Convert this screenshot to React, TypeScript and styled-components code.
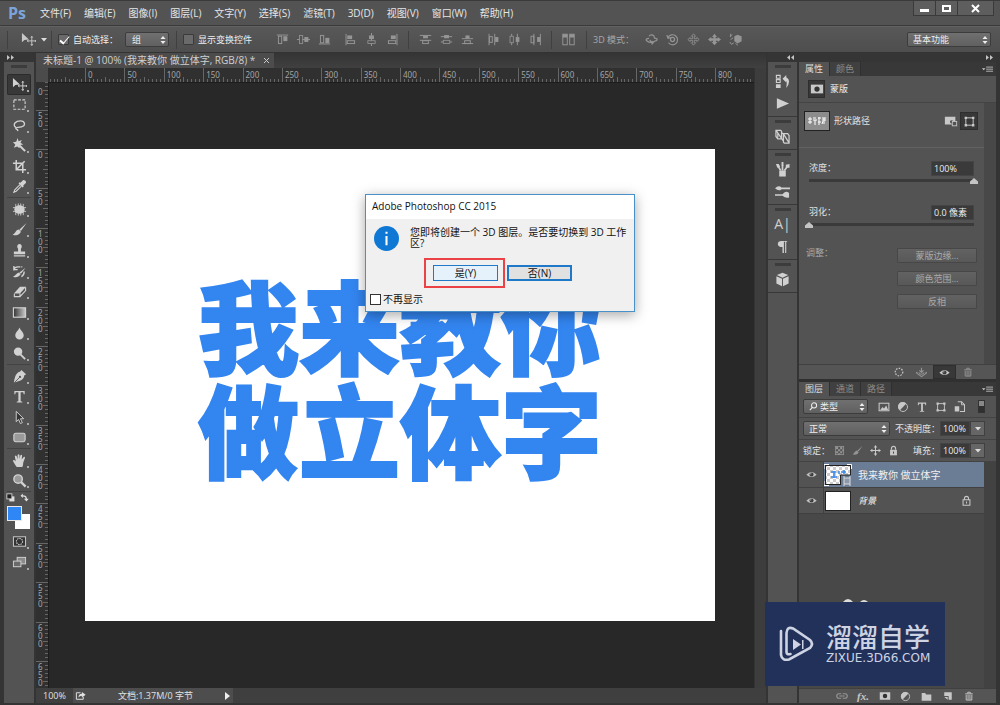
import React from "react";
import styled, { createGlobalStyle, css } from "styled-components";

const c = {
  panel: "#535353",
  dark: "#383838",
  edge: "#303030",
  field: "#3a3a3a",
  text: "#dedede",
  icon: "#c8c8c8",
  blue: "#3385f0",
};
const sans = `"Open Sans", "Noto Sans CJK SC", sans-serif`;

const GlobalStyle = createGlobalStyle`
  * { box-sizing: border-box; }
  body { margin: 0; background: ${c.edge}; }
  button, input, select { font: inherit; color: inherit; margin: 0; padding: 0; border: 0; background: none; outline: 0; }
`;

/* ---------- icons ---------- */

const IconSvg = styled.svg<{ $size: number }>`
  display: block;
  flex: none;
  width: ${(p) => p.$size}px;
  height: ${(p) => p.$size}px;
`;

const line = { fill: "none", stroke: "currentColor", strokeWidth: 1.2 };
const solid = { fill: "currentColor" };

const glyphs: Record<string, React.ReactNode> = {
  move: (
    <>
      <path d="M1 1v10l2.600-2.600L8.500 8z" {...solid} />
      <path d="M11.500 5v9M7 9.500h9M10.500 6l1-1.500 1 1.500M10.500 13l1 1.500 1-1.500M8 8.500l-1.500 1L8 10.500M15 8.500l1 1-1 1" {...line} strokeWidth={1} />
    </>
  ),
  marquee: <rect x="2" y="3" width="12" height="10" {...line} strokeDasharray="3 1.500" />,
  lasso: <path d="M4 10C0 7 4 3 9 3s6 5 1 6.500c-3 1-6 0-6 1.500 0 1.500 3 .5 2 3" {...line} strokeWidth={1.4} />,
  wand: (
    <>
      <path d="M6 0l1 3.500L10.500 2 9 5l3 2-3.500.5L8 11 5.500 9l-3.500 1.500L3.500 7 1 4.500l3.500-.5z" {...solid} />
      <path d="M8 8l6 6" {...line} strokeWidth={2.2} />
    </>
  ),
  crop: <path d="M4.500 1v10.500H15M1 4.500h10.500V15M4.500 11.500l9-9" {...line} strokeWidth={1.6} />,
  dropper: (
    <>
      <path d="M9 4l3-3q3 0 3 3l-3 3 .5 1-1.200 1L7 4.800 8 3.500z" {...solid} />
      <path d="M8.500 6L3 11.500 2 14l2.500-1L10 7.500" {...line} />
    </>
  ),
  heal: (
    <>
      <ellipse cx="8" cy="8" rx="5.500" ry="4.500" {...solid} />
      <path d="M4 2v12M6.700 1.500v13M9.300 1.500v13M12 2v12M1 6h14M1 10h14" {...line} strokeWidth={0.9} />
    </>
  ),
  brush: <path d="M15.500 1L8 8l1.500 1.500zM7.500 8L9.500 10.500C8 14.500 4 14.500 .5 13.500 4 12.500 3.500 8.500 7.500 8z" {...solid} />,
  stamp: <path d="M6 2a2.500 2.500 0 0 1 4 0q1 2-.5 4v3H14v3H2V9h4.500V6Q5 4 6 2zM2 13h12v1.500H2z" {...solid} />,
  history: (
    <>
      <path d="M14.500 4L8 9l1.500 1.500zM7.500 9l1.700 2C7 14.500 4 14.500 1 13.500 4 12.500 4.500 9.500 7.500 9z" {...solid} />
      <path d="M2 7Q2 3 7 3H11M2 2v4h4M13 8q0 4-3 5.500" {...line} strokeWidth={1.4} strokeDasharray="9 1" />
    </>
  ),
  eraser: (
    <>
      <path d="M8.500 3h6.500l-6.500 7H2z" {...solid} />
      <path d="M2.500 10.500v3h6l6-6.500V3.500M8.500 10v3.500" {...line} />
    </>
  ),
  gradient: (
    <>
      <defs>
        <linearGradient id="tool-gradient">
          <stop offset="0" stopColor="#333" />
          <stop offset="1" stopColor="#ccc" />
        </linearGradient>
      </defs>
      <rect x="1.500" y="3" width="13" height="10" fill="url(#tool-gradient)" stroke="currentColor" strokeWidth="1.200" />
    </>
  ),
  blur: <path d="M8 1.500c1 3 4.500 5 4.500 8.500a4.500 4.500 0 0 1-9 0c0-3.500 3.500-5.500 4.500-8.500z" {...solid} />,
  dodge: (
    <>
      <circle cx="6.500" cy="6" r="4.500" {...solid} />
      <path d="M9 9l5 5" {...line} strokeWidth={2} />
    </>
  ),
  pen: (
    <>
      <path d="M10 1l5 4.500-2 1.500c0 4-4 6-11 7.500 1-7 3-11 6.500-11.500z" {...solid} />
      <path d="M2.500 14.500L8 9" stroke="#535353" strokeWidth="1" />
      <circle cx="8.500" cy="8.500" r="1.200" fill="#535353" />
    </>
  ),
  type: <path d="M2.500 2h11v3.500h-1L12 3.500H9.200V13l1.800.5v.8H5v-.8l1.800-.5V3.500H4L3.500 5.500h-1z" {...solid} />,
  pointer: <path d="M4.500 1.500v11l2.500-2.500 2 4.500 2-1-2-4.200h3.500z" fill="#333" stroke="currentColor" />,
  shape: <rect x="2" y="3.500" width="12" height="9" rx="2" fill="#9a9a9a" stroke="currentColor" strokeWidth="1.200" />,
  hand: <path d="M5 15C3 12 1 9 1 8q1-1.300 3 1L3 3.500q1-1.500 2 0l1 3.200V2q1-1.500 2 0v4.500l1-4q1.300-1.200 1.800.2L10.300 7l2.200-2.800q1.500-.5 1.300 1L12 10q0 3-1 5z" {...solid} />,
  zoom: (
    <>
      <circle cx="6.500" cy="6.500" r="4.500" fill="#9a9a9a" stroke="currentColor" strokeWidth="1.500" />
      <path d="M9.500 9.500l5 5" {...line} strokeWidth={2.5} />
    </>
  ),
  quickMask: (
    <>
      <rect x="1.500" y="3" width="13" height="10" fill="#333" stroke="currentColor" />
      <circle cx="8" cy="8" r="3.300" {...line} strokeDasharray="1.500 1" />
    </>
  ),
  screens: (
    <>
      <rect x="5.500" y="2.500" width="9" height="7" fill="#8b8b8b" stroke="currentColor" />
      <rect x="1.500" y="6.500" width="8" height="6" fill="#6a6a6a" stroke="currentColor" />
    </>
  ),
  defaults: (
    <>
      <rect x="6" y="6" width="9" height="9" {...solid} />
      <rect x="1.500" y="1.500" width="9" height="9" fill="#222" stroke="currentColor" strokeWidth="1.500" />
    </>
  ),
  swap: <path d="M5 1L1 5l4 4V6q5 0 5 4H7l4.500 5 4-5h-3Q12 4 5 4z" {...solid} />,
  alignTop: (<><path d="M1 2.500h14" {...line} /><rect x="3" y="4" width="4" height="9" {...line} /><rect x="9" y="4" width="5" height="6" {...solid} /></>),
  alignMid: (<><path d="M0 8h16" {...line} /><rect x="3" y="3" width="4" height="10" fill="#535353" stroke="currentColor" /><rect x="9" y="5" width="5" height="6" {...solid} /></>),
  alignBottom: (<><path d="M1 13.500h14" {...line} /><rect x="3" y="3" width="4" height="9" {...line} /><rect x="9" y="6" width="5" height="6.500" {...solid} /></>),
  alignLeft: (<><path d="M2.500 1v14" {...line} /><rect x="4" y="3" width="6" height="4.500" {...solid} /><rect x="4" y="9.500" width="9" height="3.500" {...line} /></>),
  alignCenter: (<><path d="M8 0v16" {...line} /><rect x="5" y="3" width="6" height="4.500" {...solid} /><rect x="3.500" y="9.500" width="9" height="3.500" fill="#535353" stroke="currentColor" /></>),
  alignRight: (<><path d="M13.500 1v14" {...line} /><rect x="6" y="3" width="6" height="4.500" {...solid} /><rect x="3" y="9.500" width="9" height="3.500" {...line} /></>),
  distTop: (<><path d="M1 3h14M1 9h14" {...line} /><rect x="5" y="3.500" width="6" height="3" {...solid} /><rect x="4.500" y="9.500" width="7" height="3.500" {...line} /></>),
  distMid: (<><path d="M1 4.500h14M1 11h14" {...line} /><rect x="5" y="2.500" width="6" height="4" {...solid} /><rect x="4" y="9" width="8" height="4" fill="#535353" stroke="currentColor" /></>),
  distBottom: (<><path d="M1 7h14M1 13h14" {...line} /><rect x="5.500" y="3" width="5" height="4" {...solid} /><rect x="4.500" y="9.500" width="7" height="3.500" {...line} /></>),
  distLeft: (<><path d="M2.500 1v14M9.500 1v14" {...line} /><rect x="3" y="4.500" width="3.500" height="7" {...line} /><rect x="10" y="5" width="4" height="6" {...solid} /></>),
  distCenter: (<><path d="M4.500 1v14M11.500 1v14" {...line} /><rect x="2.500" y="4" width="4" height="8" fill="#535353" stroke="currentColor" /><rect x="9.500" y="5" width="4.500" height="6" {...solid} /></>),
  distRight: (<><path d="M6 1v14M14 1v14" {...line} /><rect x="2.500" y="4" width="3.500" height="8" {...line} /><rect x="10" y="5" width="3.500" height="6" {...solid} /></>),
  autoAlign: (<><rect x="1" y="1.500" width="5.500" height="13" {...line} /><rect x="9.500" y="1.500" width="5.500" height="13" {...line} /><path d="M1 1.500h5.500v4H1zM9.500 1.500H15v4H9.500z" {...solid} /></>),
  orbit: <path d="M5 4a3.500 3.500 0 0 1 6.500 1.500M5 6.500Q0 7 2 9.500t8 2.500l-1-2M6 8.500a3.500 3.500 0 0 0 6 1.500q4-1 2.500-3L11 6M10 12l-2 2" {...line} strokeWidth={1.5} />,
  roll: (<><circle cx="8" cy="8" r="2.500" {...line} strokeWidth={1.5} /><path d="M2.500 5.500A6.200 6.200 0 1 1 3 12M1 2.500l1.500 4 4-1" {...line} strokeWidth={1.4} /></>),
  pan3d: <path d="M8 1L5.500 4H7v3H4V5.500L1 8l3 2.500V9h3v3H5.500L8 15l2.500-3H9V9h3v1.500L15 8l-3-2.500V7H9V4h1.500z" {...line} strokeWidth={1} />,
  slide3d: <path d="M8 1L5 5h1.500l.5 1.500H4V5L0 8l4 3V9.500h2.500L6 11H4.500L8 15 11.500 11H10l-.5-1.500H12V11l4-3-4-3v1.500H9L9.500 5H11z" {...solid} />,
  scale3d: (<><path d="M10.500 2l5 2v6l-5 3-4-3V4z" {...solid} /><path d="M1 4l3-2M2 8l3-2M1 11l2 3 3-2M2 1v4M8 13l3 2" {...line} /></>),
  historyPanel: (<><path d="M1.500 1.500h4v3h-4zM1.500 6h4v3h-4z" {...line} /><path d="M1 11h5v4H1zM8 5l4-4v2.500q6 3 0 11.500 1-8 0-7.500V9z" {...solid} /></>),
  play: <path d="M2 2.500l13 5.500-13 5.500z" {...solid} />,
  navigator: <path d="M1 1.500h5l1 1v8H3L1 8zM1.500 2L7 10M3 4v5M9 5h4.500l1.500 2v8h-5l-1-1zM9.500 6l5 8M7 4l3 2M7 10l2 3" {...line} strokeWidth={1.3} />,
  brushes: (<><path d="M4.500 9h7v6.500h-7z" {...solid} /><path d="M6 9L3 4M8 9V3M10 9l3-4" {...line} strokeWidth={1.8} /><path d="M1 2l3 0 1.500 3-3 1zM7 0h2v4H7zM11.500 3l4-1v4l-4 0z" {...solid} /></>),
  presets: (<><path d="M0 4.500q4-4 7-.7h9v1.700H7Q4 8.500 0 4.500z" {...solid} /><path d="M0 11h8q3-4.500 7-1.500v5q-4 1-7-2H0z" {...solid} /></>),
  paragraph: <path d="M7 2h6v1h-1v12h-1.200V3H9.500v12H8V8.500Q3 8.500 3 5.200 3 2 7 2z" {...solid} />,
  cube: <path d="M8 .8l6 2.500-6 2.900-6-2.900zM1.500 4.500L7.500 7.300v7.900l-6-3zM14.500 4.500L8.500 7.300v7.900l6-3z" {...solid} />,
  mask: (<><rect x="1" y="3" width="14" height="10" {...solid} /><circle cx="8" cy="8" r="3" fill="#333" /></>),
  addMask: (<><path d="M1 3h12v5h-2q-3-2-4 0t2 3v1H1z" {...solid} /><rect x="9.500" y="8.500" width="5" height="5" fill="#535353" stroke="currentColor" /></>),
  vector: (<><rect x="3.500" y="3.500" width="9" height="9" {...line} /><path d="M2 2h3v3H2zM11 2h3v3h-3zM2 11h3v3H2zM11 11h3v3h-3z" {...solid} /></>),
  selection: <circle cx="8" cy="8" r="6" {...line} strokeWidth={2} strokeDasharray="2.500 2" />,
  apply: <path d="M8 1v6M5 5l3 3 3-3M2 7l-1.500 1.500L8 14l7.500-5.500L14 7M4 8q4 5 8 0" {...line} strokeWidth={1.6} />,
  eye: (<><path d="M.5 8.500Q8 0 15.500 8.500 8 15 .5 8.500z" {...solid} /><circle cx="8" cy="8" r="3" fill="#3b3b3b" /><circle cx="7" cy="7" r="1" {...solid} /></>),
  trash: (<><path d="M2 4.500h12M6 4V2h4v2" {...line} strokeWidth={1.5} /><path d="M3.500 6v8.500h9V6M6.500 6v8M9.500 6v8" {...line} strokeWidth={1.5} /></>),
  menu: (<><path d="M0 6h5L2.500 9z" {...solid} /><path d="M6 4.500h10M6 7.500h10M6 10.500h10" {...line} /></>),
  image: (<><rect x="1.500" y="3" width="13" height="10" {...line} strokeWidth={1.4} /><path d="M3 12l3-4 2 2 3-4 2.500 6z" {...solid} /></>),
  adjust: (<><circle cx="8" cy="8" r="6" {...line} /><path d="M3.800 12.200A6 6 0 1 1 12.200 3.800z" {...solid} /></>),
  smart: (<><path d="M5 1h5l4 4v9H8" {...line} strokeWidth={1.4} /><path d="M1 7h6v7H1z" {...solid} /><path d="M10 1v4h4" {...line} /></>),
  checker: (<><rect x="2" y="2" width="12" height="12" {...line} /><path d="M3 3h3v3H3zM9 3h3v3H9zM6 6h3v3H6zM3 9h3v3H3zM9 9h3v3H9zM12 6h2v3h-2zM6 12h3v2H6z" {...solid} /></>),
  moveAll: (<><path d="M8 2v12M2 8h12" {...line} strokeWidth={1.5} /><path d="M8 0l2.500 3.500h-5zM8 16l2.500-3.500h-5zM0 8l3.500-2.500v5zM16 8l-3.500-2.500v5z" {...solid} /></>),
  lock: (<><path d="M5 7V5a3 3 0 0 1 6 0v2" {...line} strokeWidth={1.7} /><path d="M3 7h10v8H3z" {...solid} /><path d="M8 9.500v3" stroke="#444" strokeWidth="1.500" /></>),
  lockLine: <path d="M5 7V5a3 3 0 0 1 6 0v2M3 7h10v8H3zM8 9.500v3" {...line} strokeWidth={1.5} />,
  search: (<><circle cx="9" cy="6" r="4.500" {...line} strokeWidth={1.8} /><path d="M6 9.500l-4.500 5" {...line} strokeWidth={2} /></>),
  link: <path d="M7 5H4a3 3 0 0 0 0 6h3M9 5h3a3 3 0 0 1 0 6H9M4.500 8h7" {...line} strokeWidth={1.5} />,
  folder: <path d="M1 3h5l1.500 2H15v9H1z" {...solid} />,
  newLayer: (<><path d="M2 2h12v12H9V8H2z" {...solid} /><path d="M2 9.500h5.500V14z" {...solid} /></>),
  share: (<><path d="M8 4H2v9.500h10V10" {...line} strokeWidth={1.4} /><path d="M5 11q0-5 5-5.500V3l5.500 4-5.500 4V8.500Q7 8.500 5 11z" {...solid} /></>),
};

const Icon = ({ name, size = 14 }: { name: string; size?: number }) => (
  <IconSvg $size={size} viewBox="0 0 16 16" aria-hidden="true">
    {glyphs[name]}
  </IconSvg>
);

/* ---------- shared controls ---------- */

const IconButton = styled.button<{ $w?: number; $dim?: boolean; $on?: boolean }>`
  display: flex;
  align-items: center;
  justify-content: center;
  width: ${(p) => p.$w ?? 20}px;
  height: 18px;
  flex: none;
  color: ${(p) => (p.$dim ? "#959595" : c.icon)};
  ${(p) => p.$on && css`background: ${c.dark}; box-shadow: inset 0 0 0 1px #2e2e2e;`}
`;

const SelectBox = styled.span<{ $w: number; $pad?: number }>`
  display: grid;
  flex: none;
  width: ${(p) => p.$w}px;
  height: 15px;
  align-items: center;
  color: #eee;
  background: linear-gradient(#707070, #606060);
  border: 1px solid #3c3c3c;
  border-radius: 2px;
  > * { grid-area: 1 / 1; }
  > svg { justify-self: end; margin-right: 2px; pointer-events: none; }
  > svg:first-child { justify-self: start; margin-left: 5px; }
  select {
    appearance: none;
    width: 100%;
    height: 13px;
    line-height: 13px;
    padding-left: ${(p) => p.$pad ?? 6}px;
  }
`;

const Select = ({ label, value, w, pad, icon }: { label: string; value: string; w: number; pad?: number; icon?: string }) => (
  <SelectBox $w={w} $pad={pad}>
    {icon && <Icon name={icon} size={9} />}
    <select aria-label={label} defaultValue={value}>
      <option>{value}</option>
    </select>
    <svg width="6" height="8" viewBox="0 0 6 8" aria-hidden="true">
      <path d="M3 0l2.500 3h-5zM3 8L.5 5h5z" fill="#eee" />
    </svg>
  </SelectBox>
);

const CheckLabel = styled.label<{ $after: number }>`
  display: flex;
  align-items: center;
  gap: 4px;
  margin-right: ${(p) => p.$after}px;
  white-space: nowrap;
  color: #eee;
`;
const DarkCheck = styled.input`
  appearance: none;
  width: 11px;
  height: 11px;
  border: 1px solid #3a3a3a;
  border-radius: 1px;
  background: #6a6a6a;
  position: relative;
  &:checked::after {
    content: "";
    position: absolute;
    left: 3px;
    top: -1px;
    width: 4px;
    height: 8px;
    border: solid #fff;
    border-width: 0 1px 2px 0;
    rotate: 40deg;
  }
`;

/* ---------- frame ---------- */

const Window = styled.div`
  position: relative;
  display: flex;
  flex-direction: column;
  height: 100vh;
  min-height: 640px;
  background: ${c.edge};
  color: ${c.text};
  font: 9px/12px ${sans};
  user-select: none;
`;

const MenuBar = styled.header`
  display: flex;
  align-items: center;
  height: 26px;
  flex: none;
  padding-left: 8px;
  background: ${c.panel};
  border-top: 1px solid #3a3a3a;
  border-bottom: 1px solid #3b3b3b;
`;
const PsMark = styled.div`
  width: 32px;
  color: #7ba5da;
  font: 700 16px/22px ${sans};
`;
const MenuList = styled.nav`
  display: flex;
  gap: 13px;
  font-size: 10px;
  button { white-space: nowrap; color: #e6e6e6; }
`;
const WindowButtons = styled.div`
  display: flex;
  align-self: flex-start;
  margin-left: auto;
  margin-right: 6px;
  height: 15px;
  border: 1px solid #3a3a3a;
  border-top: 0;
  background: #5e5e5e;
  color: #fff;
  button {
    display: grid;
    place-items: center;
    width: 22px;
    border-right: 1px solid #3a3a3a;
  }
  button:last-child { width: 35px; border: 0; }
`;

const OptionsBar = styled.div`
  display: flex;
  align-items: center;
  height: 27px;
  flex: none;
  padding: 0 9px 0 7px;
  background: linear-gradient(#585858, #4e4e4e);
  border-top: 1px solid #616161;
  border-bottom: 1px solid #333;
`;
const Rule = styled.i<{ $before?: number; $after?: number }>`
  width: 1px;
  height: 18px;
  margin-left: ${(p) => p.$before ?? 0}px;
  margin-right: ${(p) => p.$after ?? 6}px;
  background: #404040;
  flex: none;
`;
const PresetButton = styled.button`
  display: flex;
  align-items: center;
  gap: 5px;
  padding-left: 7px;
  color: ${c.icon};
`;
const IconGroup = styled.div`
  display: flex;
  margin-right: 5px;
  flex: none;
`;
const ModeLabel = styled.span`
  width: 48px;
  white-space: nowrap;
  color: #a8a8a8;
`;
const Push = styled.div`
  margin-left: auto;
`;

const Body = styled.div`
  display: grid;
  grid-template-columns: 30px minmax(0, 1fr) 29px 197px;
  grid-template-rows: minmax(0, 1fr);
  gap: 2px;
  flex: 1;
  min-height: 0;
  padding: 0 4px 2px;
  background: #343434;
`;
const Column = styled.div`
  display: flex;
  flex-direction: column;
  min-height: 0;
  background: ${c.panel};
`;
const Strip = styled.div<{ $right?: boolean }>`
  display: flex;
  align-items: center;
  justify-content: ${(p) => (p.$right ? "flex-end" : "flex-start")};
  height: 9px;
  flex: none;
  padding: 0 3px;
  background: #353535;
  color: #c4c4c4;
`;
const Chevrons = ({ left }: { left?: boolean }) => (
  <svg width="7" height="5" viewBox="0 0 7 5" aria-hidden="true">
    <path d={left ? "M3 0v5L0 2.500zM7 0v5L4 2.500z" : "M0 0v5l3-2.500zM4 0v5l3-2.500z"} fill="currentColor" />
  </svg>
);
const Grip = styled.i<{ $after: number }>`
  width: 16px;
  height: 3px;
  margin: 3px auto ${(p) => p.$after}px;
  flex: none;
  background: #3c3c3c;
`;

/* ---------- tools ---------- */

const ToolGroup = styled.div<{ $h: number }>`
  display: grid;
  grid-auto-rows: 1fr;
  height: ${(p) => p.$h}px;
  flex: none;
  justify-items: center;
  border-bottom: 1px solid #434343;
  margin: 0 3px 1px;
  &:last-of-type { border: 0; }
`;
const ToolButton = styled.button<{ $on?: boolean }>`
  position: relative;
  display: grid;
  place-items: center;
  width: 24px;
  color: #d2d2d2;
  ${(p) => p.$on && css`background: ${c.dark}; box-shadow: inset 0 0 0 1px #2b2b2b; border-radius: 2px;`}
  &::after {
    content: "";
    position: absolute;
    right: 2px;
    bottom: 3px;
    width: 2px;
    height: 2px;
    background: #aaa;
  }
`;
const Tiny = styled.div`
  display: flex;
  justify-content: space-between;
  padding: 0 5px 0 2px;
`;
const Swatches = styled.div`
  display: grid;
  width: 23px;
  height: 23px;
  margin: 4px 0 2px 3px;
  i { grid-area: 1 / 1; width: 15px; height: 15px; }
  i:first-child { background: #fff; place-self: end; }
  i:last-child { background: #2e87f5; border: 1px solid #e8e8e8; }
`;
const toolGroups: [number, string[]][] = [
  [124, ["move", "marquee", "lasso", "wand", "crop", "dropper"]],
  [166, ["heal", "brush", "stamp", "history", "eraser", "gradient", "blur", "dodge"]],
  [83, ["pen", "type", "pointer", "shape"]],
  [42, ["hand", "zoom"]],
];

/* ---------- document ---------- */

const DocColumn = styled.main`
  display: grid;
  grid-template-columns: 12px minmax(0, 1fr) 12px;
  grid-template-rows: 15px 14px minmax(0, 1fr) 15px;
  min-height: 0;
  background: #3a3a3a;
`;
const TabStrip = styled.div`
  grid-column: 1 / -1;
  display: flex;
  background: linear-gradient(#343434, #404040);
`;
const DocTab = styled.div`
  display: flex;
  align-items: center;
  gap: 9px;
  padding: 0 4px 0 7px;
  background: #4c4c4c;
  color: #d0d0d0;
  font-size: 10px;
  line-height: 15px;
  white-space: nowrap;
`;
const Corner = styled.div`
  background: #4b4b4b;
`;
const RulerSvg = styled.svg`
  display: block;
  width: 100%;
  height: 100%;
  background: #303030;
  text { font: 8px "Noto Sans", sans-serif; fill: #a5a5a5; }
  path { stroke: #666; fill: none; }
`;
const Track = styled.div`
  grid-row: 2 / 4;
  grid-column: 3;
  background: #3d3d3d;
  border-left: 1px solid #333;
`;
const Canvas = styled.div`
  grid-row: 3;
  grid-column: 2;
  padding: 66px 36px 0;
  overflow: hidden;
  background: #282828;
  border-top: 1px solid #1c1c1c;
  border-left: 1px solid #1c1c1c;
`;
const Artboard = styled.div`
  width: 630px;
  height: 472px;
  padding-top: 122px;
  background: #fff;
  color: ${c.blue};
  font: 900 101px/104px "Noto Sans CJK SC", sans-serif;
  -webkit-text-stroke: 2px ${c.blue};
  text-align: center;
  p { margin: 0; }
`;
const StatusBar = styled.footer`
  grid-column: 1 / -1;
  display: flex;
  background: #3f3f3f;
  line-height: 15px;
  color: #e2e2e2;
`;
const ZoomField = styled.input`
  width: 37px;
  padding-left: 7px;
`;
const StatusInfo = styled.div`
  display: flex;
  align-items: center;
  width: 160px;
  padding: 0 2px;
  background: #4d4d4d;
  span { flex: 1; text-align: center; }
`;

const UNIT = 39.375;
const ORIGIN_X = 37;
const ORIGIN_Y = 67;

const HorizontalRuler = () => {
  let d = "";
  for (let i = -9; i < 400; i++) {
    const x = Math.round(ORIGIN_X + (i * UNIT) / 10) + 0.5;
    if (x < 0) continue;
    const h = i % 10 === 0 ? 14 : i % 5 === 0 ? 5 : 3;
    d += `M${x} 14v-${h}`;
  }
  return (
    <RulerSvg aria-hidden="true">
      <path d={d} />
      {Array.from({ length: 17 }, (_, i) => (
        <text key={i} x={ORIGIN_X + 3 + i * UNIT} y={10}>{i * 50}</text>
      ))}
    </RulerSvg>
  );
};

const VerticalRuler = () => {
  let d = "";
  for (let i = -17; i < 300; i++) {
    const y = Math.round(ORIGIN_Y + (i * UNIT) / 10) + 0.5;
    const w = i % 10 === 0 ? 12 : i % 5 === 0 ? 5 : 3;
    d += `M12 ${y}h-${w}`;
  }
  const digits: { y: number; digit: string }[] = [];
  for (let i = -2; i <= 13; i++) {
    String(Math.abs(i * 50)).split("").forEach((digit, n) => {
      const y = ORIGIN_Y + i * UNIT + 9 + n * 8;
      if (y > 12) digits.push({ y, digit });
    });
  }
  return (
    <RulerSvg aria-hidden="true">
      <path d={d} />
      {digits.map(({ y, digit }) => <text key={y} x={2} y={y}>{digit}</text>)}
    </RulerSvg>
  );
};

/* ---------- dock ---------- */

const DockGroup = styled.div`
  display: flex;
  flex-direction: column;
  align-items: center;
  padding-bottom: 2px;
  border-bottom: 1px solid #383838;
  color: #d0d0d0;
`;
const DockButton = styled.button`
  display: grid;
  place-items: center;
  width: 26px;
  height: 22px;
`;
const AType = styled.span`
  font: 14px/18px ${sans};
`;
const dockGroups = [["historyPanel", "play"], ["navigator"], ["brushes", "presets"], ["A|", "paragraph"], ["cube"]];

/* ---------- panels ---------- */

const Tabs = styled.div`
  display: flex;
  height: 14px;
  flex: none;
  background: ${c.dark};
  color: #cfcfcf;
  > :last-child { margin-left: auto; height: 14px; }
`;
const Tab = styled.button<{ $on?: boolean }>`
  padding: 0 6px;
  color: ${(p) => (p.$on ? "#dcdcdc" : "#8c8c8c")};
  background: ${(p) => (p.$on ? c.panel : "#404040")};
  border-right: 1px solid #303030;
`;
const PanelTitle = styled.div`
  display: flex;
  align-items: center;
  gap: 5px;
  height: 27px;
  flex: none;
  padding-left: 9px;
  color: #eee;
  border-bottom: 1px solid #444;
`;
const Scroller = styled.div`
  border-right: 12px solid #484848;
`;
const PathRow = styled.div`
  display: flex;
  align-items: center;
  height: 45px;
  padding: 0 6px 8px 5px;
  border-bottom: 1px solid #626262;
  span { flex: 1; color: #e2e2e2; padding-left: 4px; }
`;
const PathThumb = styled.div`
  display: grid;
  place-items: center;
  width: 26px;
  height: 20px;
  background: #8c8c8c;
  border: 1px solid #222;
  color: #fff;
`;
const Field = styled.div`
  padding: 12px 10px 6px;
  color: #e2e2e2;
  > div { display: flex; justify-content: space-between; align-items: center; height: 16px; }
`;
const ValueInput = styled.input<{ $w: number }>`
  width: ${(p) => p.$w}px;
  height: 15px;
  padding-left: 2px;
  color: #eee;
  background: ${c.field};
  border: 1px solid #444;
`;
const Slider = styled.input`
  appearance: none;
  display: block;
  width: calc(100% + 8px);
  height: 10px;
  margin: 0 -4px;
  background: linear-gradient(#3a3a3a, #3a3a3a) center 3px / calc(100% - 8px) 3px no-repeat;
  &::-webkit-slider-thumb {
    appearance: none;
    width: 8px;
    height: 6px;
    background: #c4c4c4;
    clip-path: polygon(50% 0, 100% 60%, 100% 100%, 0 100%, 0 60%);
  }
`;
const Adjust = styled.div`
  display: flex;
  justify-content: space-between;
  padding: 11px 7px 55px;
  color: #aaa;
`;
const AdjustButtons = styled.div`
  display: grid;
  gap: 8px;
  margin-top: 1px;
  button {
    width: 80px;
    height: 15px;
    line-height: 13px;
    color: #aaa;
    background: linear-gradient(#626262, #585858);
    border: 1px solid #474747;
    border-radius: 1px;
  }
`;
const PanelFooter = styled.div`
  display: flex;
  align-items: center;
  justify-content: flex-end;
  height: 15px;
  flex: none;
  padding-right: 17px;
  background: #555;
  border-top: 1px solid #404040;
  button { height: 14px; }
`;
const Spacer = styled.div`
  height: 3px;
  flex: none;
  background: ${c.edge};
`;
const LayerRow = styled.div`
  display: flex;
  align-items: center;
  height: 22px;
  flex: none;
  padding: 0 11px 0 4px;
  border-bottom: 1px solid #434343;
  color: #e2e2e2;
`;
const Filters = styled.div<{ $before: number }>`
  display: flex;
  margin-left: ${(p) => p.$before}px;
`;
const Toggle = styled.i`
  width: 7px;
  height: 13px;
  margin-left: auto;
  background: linear-gradient(#888 45%, #303030 45%);
  border: 1px solid #333;
`;
const Amount = styled.label`
  display: flex;
  align-items: center;
  margin-left: auto;
  white-space: nowrap;
`;
const Stepper = styled.button`
  display: grid;
  place-items: center;
  width: 15px;
  height: 15px;
  background: #666;
  border: 1px solid #404040;
`;
const LayerList = styled.div`
  flex: 1;
  min-height: 0;
  background: #484848;
  border-right: 12px solid #424242;
`;
const Layer = styled.div<{ $on?: boolean }>`
  display: flex;
  align-items: center;
  height: 26px;
  background: ${(p) => (p.$on ? "#6b7c95" : c.panel)};
  border-bottom: 1px solid #404040;
  color: #f0f0f0;
`;
const LayerName = styled.span<{ $background?: boolean }>`
  flex: 1;
  padding-left: 6px;
  font-size: ${(p) => (p.$background ? 9 : 10)}px;
  font-style: ${(p) => (p.$background ? "italic" : "normal")};
`;
const EyeCell = styled.button`
  display: grid;
  place-items: center;
  width: 25px;
  height: 25px;
  background: ${c.panel};
  border-right: 1px solid #404040;
  color: #c4c4c4;
`;
const Thumb = styled.svg`
  display: block;
  width: 28px;
  height: 22px;
`;
const Fx = styled.span`
  font: italic 700 11px/12px "Liberation Serif", serif;
`;
const Caret = () => (
  <svg width="6" height="4" viewBox="0 0 6 4" aria-hidden="true"><path d="M0 0h6L3 3.500z" fill="#ddd" /></svg>
);

/* ---------- dialog ---------- */

const Dialog = styled.section`
  position: absolute;
  left: 50%;
  top: 194px;
  width: 270px;
  margin-left: -135px;
  background: #f0f0f0;
  border: 1px solid #4a90c8;
  box-shadow: 0 3px 12px rgba(0, 0, 0, 0.35);
  color: #111;
  font: 10px/11px ${sans};
  h2 { margin: 0; padding: 0 6px; height: 24px; font-size: 10px; font-weight: 400; line-height: 23px; background: #fff; }
`;
const Message = styled.div`
  display: flex;
  gap: 11px;
  padding: 7px 2px 0 8px;
  p { margin: 1px 0 0; width: 220px; }
`;
const Buttons = styled.div`
  display: flex;
  align-items: center;
  gap: 2px;
  padding-left: 58px;
  margin-top: 7px;
`;
const Highlight = styled.div`
  padding: 5px 5px 5px 7px;
  border: 2px solid #ea4245;
`;
const DialogButton = styled.button<{ $focus?: boolean }>`
  display: block;
  width: 65px;
  height: 16px;
  line-height: 12px;
  background: ${(p) => (p.$focus ? "#e1e1e1" : "#e5f1fb")};
  border: ${(p) => (p.$focus ? 2 : 1)}px solid #2078c8;
`;
const DontShow = styled.label`
  display: flex;
  align-items: center;
  gap: 2px;
  padding: 0 4px;
  height: 23px;
  input { appearance: none; width: 11px; height: 11px; background: #fff; border: 1px solid #333; }
`;

/* ---------- watermark ---------- */

const Watermark = styled.aside`
  position: absolute;
  right: 55px;
  bottom: 19px;
  display: flex;
  align-items: center;
  gap: 11px;
  width: 180px;
  height: 84px;
  padding-left: 14px;
  background: #21315a;
  color: #cdd3e3;
  strong { display: block; font: 500 26px/28px "Noto Sans CJK SC", sans-serif; }
  small { display: block; font: 12px/16px "DejaVu Sans", sans-serif; white-space: nowrap; }
  > svg { flex: none; overflow: visible; }
`;

const menus = ["文件(F)", "编辑(E)", "图像(I)", "图层(L)", "文字(Y)", "选择(S)", "滤镜(T)", "3D(D)", "视图(V)", "窗口(W)", "帮助(H)"];

const OptionIcons = ({ names }: { names: string[] }) => (
  <IconGroup>
    {names.map((n) => (
      <IconButton key={n} $w={21} $dim aria-label={n}><Icon name={n} size={13} /></IconButton>
    ))}
  </IconGroup>
);

export default function App() {
  return (
    <Window>
      <GlobalStyle />
      <MenuBar>
        <PsMark>Ps</PsMark>
        <MenuList>{menus.map((m) => <button key={m}>{m}</button>)}</MenuList>
        <WindowButtons>
          <button aria-label="最小化"><svg width="9" height="9"><path d="M0 5h9v3H0z" fill="#fff" /></svg></button>
          <button aria-label="最大化"><svg width="9" height="9"><path d="M1 2h7v5H1z" fill="none" stroke="#fff" strokeWidth="2" /></svg></button>
          <button aria-label="关闭"><svg width="9" height="9"><path d="M1 1l7 7M8 1L1 8" stroke="#fff" strokeWidth="2" /></svg></button>
        </WindowButtons>
      </MenuBar>

      <OptionsBar>
        <Rule />
        <PresetButton aria-label="移动工具">
          <Icon name="move" size={15} />
          <Caret />
        </PresetButton>
        <Rule $before={4} $after={6} />
        <CheckLabel $after={7}><DarkCheck type="checkbox" defaultChecked />自动选择：</CheckLabel>
        <Select label="自动选择" value="组" w={44} />
        <Rule $before={7} $after={6} />
        <CheckLabel $after={20}><DarkCheck type="checkbox" />显示变换控件</CheckLabel>
        <OptionIcons names={["alignTop", "alignMid", "alignBottom"]} />
        <OptionIcons names={["alignLeft", "alignCenter", "alignRight"]} />
        <Rule />
        <OptionIcons names={["distTop", "distMid", "distBottom"]} />
        <OptionIcons names={["distLeft", "distCenter", "distRight"]} />
        <Rule />
        <OptionIcons names={["autoAlign"]} />
        <Rule $before={2} />
        <ModeLabel>3D 模式：</ModeLabel>
        <OptionIcons names={["orbit", "roll", "pan3d", "slide3d", "scale3d"]} />
        <Push><Select label="工作区" value="基本功能" w={84} pad={5} /></Push>
      </OptionsBar>

      <Body>
        <Column>
          <Strip><Chevrons /></Strip>
          <Grip $after={6} />
          {toolGroups.map(([h, names], g) => (
            <ToolGroup key={g} $h={h}>
              {names.map((n) => (
                <ToolButton key={n} $on={n === "move"} aria-label={n}><Icon name={n} size={15} /></ToolButton>
              ))}
            </ToolGroup>
          ))}
          <Tiny><Icon name="defaults" size={9} /><Icon name="swap" size={9} /></Tiny>
          <Swatches><i /><i /></Swatches>
          <ToolGroup $h={42}>
            {["quickMask", "screens"].map((n) => (
              <ToolButton key={n} aria-label={n}><Icon name={n} size={15} /></ToolButton>
            ))}
          </ToolGroup>
        </Column>

        <DocColumn>
          <TabStrip>
            <DocTab>
              <span>未标题-1 @ 100% (我来教你 做立体字, RGB/8) *</span>
              <button aria-label="关闭文档"><svg width="6" height="6"><path d="M0 0l5 5M5 0L0 5" stroke="#ccc" /></svg></button>
            </DocTab>
          </TabStrip>
          <Corner />
          <HorizontalRuler />
          <Track />
          <VerticalRuler />
          <Canvas>
            <Artboard>
              <p>我来教你</p>
              <p>做立体字</p>
            </Artboard>
          </Canvas>
          <StatusBar>
            <ZoomField aria-label="缩放" defaultValue="100%" />
            <StatusInfo>
              <Icon name="share" size={11} />
              <span>文档:1.37M/0 字节</span>
              <svg width="6" height="8"><path d="M0 0v8l5-4z" fill="#eee" /></svg>
            </StatusInfo>
          </StatusBar>
        </DocColumn>

        <Column>
          <Strip $right><Chevrons left /></Strip>
          {dockGroups.map((names, g) => (
            <DockGroup key={g}>
              <Grip $after={2} />
              {names.map((n) => (
                <DockButton key={n} aria-label={n}>{n === "A|" ? <AType>A|</AType> : <Icon name={n} size={15} />}</DockButton>
              ))}
            </DockGroup>
          ))}
        </Column>

        <Column>
          <Strip $right><Chevrons /></Strip>
          <Tabs>
            <Tab $on>属性</Tab>
            <Tab>颜色</Tab>
            <IconButton $w={17} aria-label="面板菜单"><Icon name="menu" size={11} /></IconButton>
          </Tabs>
          <PanelTitle>
            <IconButton $w={17} $on aria-label="蒙版"><Icon name="mask" size={14} /></IconButton>
            蒙版
          </PanelTitle>
          <Scroller>
            <PathRow>
              <PathThumb>
                <svg width="18" height="8" viewBox="0 0 18 8" aria-hidden="true">
                  <path d="M0 2h4M2 0v7M0 5h4M5 1h3M5 3h4M7 3v5M10 1h3M11 0v8M10 5h3M14 1h4M14 3h4M16 1v6M14 7l1-3" stroke="currentColor" fill="none" />
                </svg>
              </PathThumb>
              <span>形状路径</span>
              <IconButton $w={18} aria-label="添加像素蒙版"><Icon name="addMask" size={14} /></IconButton>
              <IconButton $w={18} $on aria-label="矢量蒙版"><Icon name="vector" size={13} /></IconButton>
            </PathRow>
            <Field>
              <div><label htmlFor="density">浓度：</label><ValueInput $w={43} id="density" defaultValue="100%" /></div>
              <Slider type="range" aria-label="浓度" defaultValue={100} />
            </Field>
            <Field>
              <div><label htmlFor="feather">羽化：</label><ValueInput $w={43} id="feather" defaultValue="0.0 像素" /></div>
              <Slider type="range" aria-label="羽化" defaultValue={0} />
            </Field>
            <Adjust>
              调整：
              <AdjustButtons>
                <button>蒙版边缘...</button>
                <button>颜色范围...</button>
                <button>反相</button>
              </AdjustButtons>
            </Adjust>
          </Scroller>
          <PanelFooter>
            <IconButton $w={23} aria-label="载入选区"><Icon name="selection" size={10} /></IconButton>
            <IconButton $w={23} $dim aria-label="应用蒙版"><Icon name="apply" size={11} /></IconButton>
            <IconButton $w={23} $on aria-label="停用蒙版"><Icon name="eye" size={11} /></IconButton>
            <IconButton $w={23} $dim aria-label="删除蒙版"><Icon name="trash" size={10} /></IconButton>
          </PanelFooter>
          <Spacer />
          <Tabs>
            <Tab $on>图层</Tab>
            <Tab>通道</Tab>
            <Tab>路径</Tab>
            <IconButton $w={17} aria-label="面板菜单"><Icon name="menu" size={11} /></IconButton>
          </Tabs>
          <LayerRow>
            <Select label="滤镜类型" value="类型" w={65} pad={16} icon="search" />
            <Filters $before={6}>
              {["image", "adjust", "type", "vector", "smart"].map((n) => (
                <IconButton key={n} $w={19} aria-label={n}><Icon name={n} size={12} /></IconButton>
              ))}
            </Filters>
            <Toggle />
          </LayerRow>
          <LayerRow>
            <Select label="混合模式" value="正常" w={87} pad={5} />
            <Amount>不透明度：<ValueInput $w={30} defaultValue="100%" /></Amount>
            <Stepper aria-label="不透明度滑块"><Caret /></Stepper>
          </LayerRow>
          <LayerRow>
            锁定：
            <Filters $before={0}>
              {["checker", "brush", "moveAll", "lock"].map((n, i) => (
                <IconButton key={n} $w={18} $dim={i < 2} aria-label={n}><Icon name={n} size={11} /></IconButton>
              ))}
            </Filters>
            <Amount>填充：<ValueInput $w={30} defaultValue="100%" /></Amount>
            <Stepper aria-label="填充滑块"><Caret /></Stepper>
          </LayerRow>
          <LayerList>
            <Layer $on>
              <EyeCell aria-label="图层可见性"><Icon name="eye" size={11} /></EyeCell>
              <Thumb viewBox="0 0 28 22">
                <defs>
                  <pattern id="alpha" width="6" height="6" patternUnits="userSpaceOnUse">
                    <path d="M0 0h6v6H0z" fill="#fff" />
                    <path d="M0 0h3v3H0zM3 3h3v3H3z" fill="#ccc" />
                  </pattern>
                </defs>
                <rect x="1.500" y="1.500" width="25" height="19" fill="url(#alpha)" stroke="#222" />
                <path d="M7 8h5M7 13h6M10 7v7M15 7v3M17 8h5M20 6v4" fill="none" stroke="#3d88ec" strokeWidth="1.500" />
                <path d="M17 11h11v11H17z" fill="#6b7c95" />
                <path d="M16.500 21V11h10" stroke="#222" fill="none" />
                <path d="M20 14h6v6h-6zM19 13h2M25 13h2M19 21h2M25 21h2" stroke="#ddd" fill="#8c99ac" />
                <path d="M0 5V.5h5M23 .5h4.500V5M0 17v4.500h5" stroke="#fff" fill="none" />
              </Thumb>
              <LayerName>我来教你 做立体字</LayerName>
            </Layer>
            <Layer>
              <EyeCell aria-label="图层可见性"><Icon name="eye" size={11} /></EyeCell>
              <Thumb viewBox="0 0 28 22"><rect x="1.500" y="1.500" width="25" height="19" fill="#fff" stroke="#222" /></Thumb>
              <LayerName $background>背景</LayerName>
              <IconButton $w={35} aria-label="锁定"><Icon name="lockLine" size={11} /></IconButton>
            </Layer>
          </LayerList>
          <PanelFooter>
            <IconButton $w={21} $dim aria-label="链接图层"><Icon name="link" size={12} /></IconButton>
            <IconButton $w={22} aria-label="图层样式"><Fx>fx.</Fx></IconButton>
            <IconButton $w={21} aria-label="图层蒙版"><Icon name="mask" size={12} /></IconButton>
            <IconButton $w={21} aria-label="调整图层"><Icon name="adjust" size={11} /></IconButton>
            <IconButton $w={21} aria-label="新建组"><Icon name="folder" size={11} /></IconButton>
            <IconButton $w={21} aria-label="新建图层"><Icon name="newLayer" size={10} /></IconButton>
            <IconButton $w={21} aria-label="删除图层"><Icon name="trash" size={10} /></IconButton>
          </PanelFooter>
        </Column>
      </Body>

      <Dialog role="dialog" aria-labelledby="dialog-title">
        <h2 id="dialog-title">Adobe Photoshop CC 2015</h2>
        <Message>
          <IconSvg $size={25} viewBox="0 0 24 24">
            <circle cx="12" cy="12" r="12" fill="#0f78d4" />
            <path d="M11 5.500h2v2h-2zM11 9.500h2v9h-2z" fill="#fff" />
          </IconSvg>
          <p>您即将创建一个 3D 图层。是否要切换到 3D 工作区?</p>
        </Message>
        <Buttons>
          <Highlight><DialogButton>是(Y)</DialogButton></Highlight>
          <DialogButton $focus>否(N)</DialogButton>
        </Buttons>
        <DontShow><input type="checkbox" />不再显示</DontShow>
      </Dialog>

      <Watermark>
        <svg width="36" height="36" viewBox="0 0 36 36" aria-hidden="true">
          <path d="M2 5v24q1 6 8 4.500L31 22q4-4 0-8L14 2.500Q8 0 7.500 7v19q0 3 4 2" fill="none" stroke="#cdd3e3" strokeWidth="2.600" strokeLinecap="round" />
          <path d="M14 13v11l8-5.500zM23 14h1.500v9H23z" fill="#cdd3e3" />
          <path d="M64-24q5-6 10 0zM81-24q4-4 8 0z" fill="#ddd" />
        </svg>
        <div>
          <strong>溜溜自学</strong>
          <small>ZIXUE.3D66.COM</small>
        </div>
      </Watermark>
    </Window>
  );
}
